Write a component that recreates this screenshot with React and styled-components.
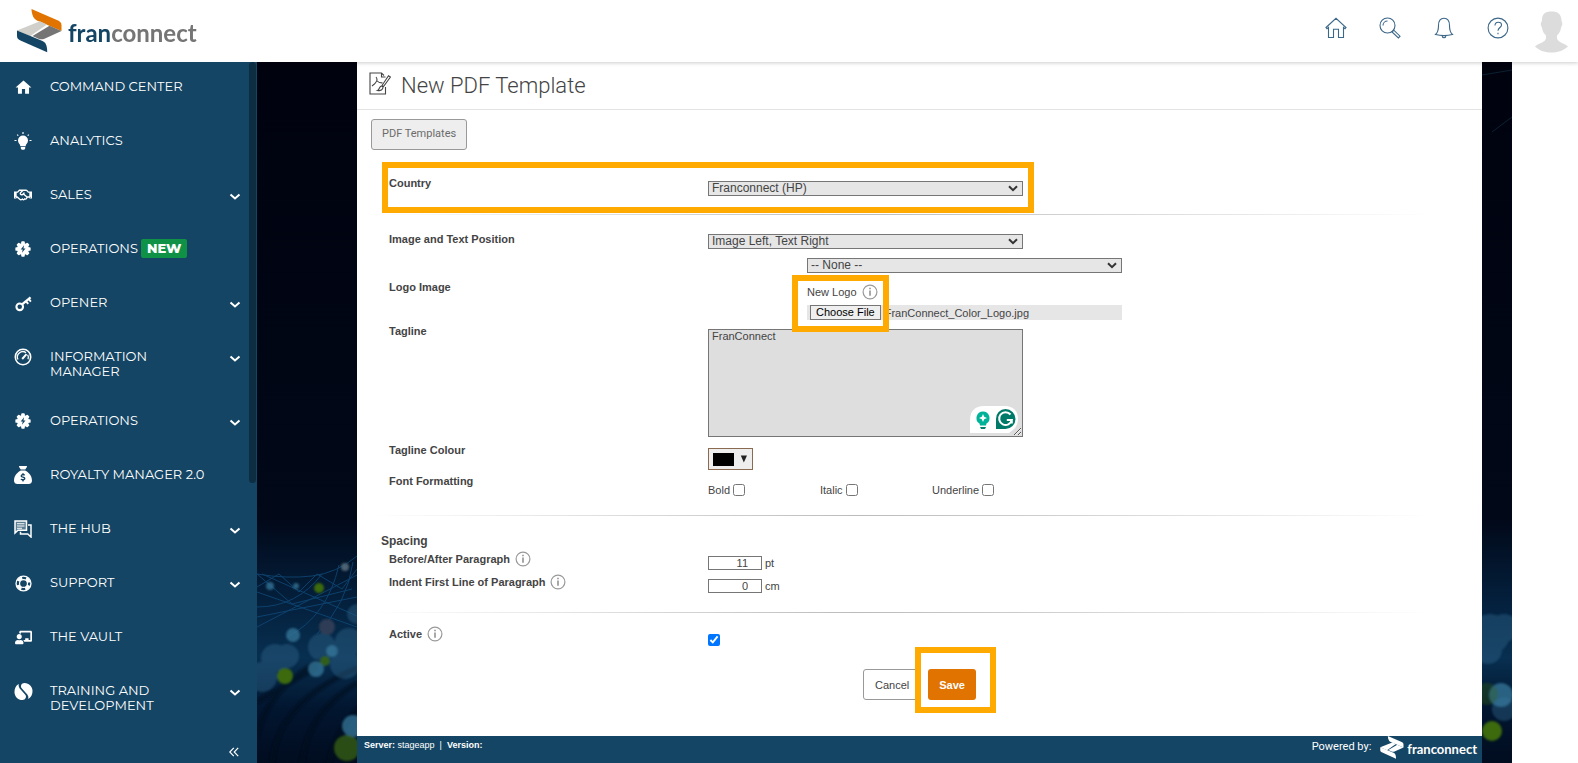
// src/App.jsx
import React, { useRef, useState } from 'react';
import styled, { createGlobalStyle } from 'styled-components';
import { FaRegHandshake, FaChalkboardTeacher } from 'react-icons/fa';
import { FaSackDollar } from 'react-icons/fa6';
import { MdHome } from 'react-icons/md';

const BulbIcon = () => (
  <svg viewBox="0 0 18 18" width="18" height="18" fill="currentColor">
    <path d="M9 3.6a5 5 0 0 0-5 5c0 2.6 2 3.2 2.4 5.6h5.2C12 11.8 14 11.2 14 8.600a5 5 0 0 0-5-5zM6.800 15h4.400v1.400l-1 1.400H7.800l-1-1.400z" />
    <path
      d="M9 0v2M3.200 2.600l1.100 1.100M14.800 2.600l-1.100 1.100M.5 8.500h2M15.500 8.500h2"
      stroke="currentColor"
      strokeWidth="1.2"
    />
  </svg>
);

const GearIcon = () => (
  <svg viewBox="0 0 18 18" width="16" height="16" fill="currentColor">
    <circle cx="9" cy="9" r="6.8" />
    {[0, 45, 90, 135].map((angle) => (
      <rect key={angle} x="7" y="0.4" width="4" height="17.2" rx="1" transform={`rotate(${angle} 9 9)`} />
    ))}
    <path d="M10.200 4.800 6.400 9.500h2.300l-.8 3.700 3.900-4.800H9.500z" fill="#144564" />
  </svg>
);

const KeyIcon = () => (
  <svg viewBox="0 0 18 18" width="17" height="17" fill="none" stroke="currentColor">
    <circle cx="5" cy="12.500" r="3.500" strokeWidth="2.200" />
    <path d="M7.500 10 16.500 2.500" strokeWidth="2.400" />
    <path d="m11.500 6.500 2.500 3M14.200 3.800l2.600 3.200" strokeWidth="2" />
  </svg>
);

const GaugeIcon = () => (
  <svg viewBox="0 0 18 18" width="18" height="18" fill="none" stroke="currentColor">
    <circle cx="9" cy="9" r="7.700" strokeWidth="1.600" />
    <path d="M4 11.500a5.400 5.400 0 0 1 8-6.800M13.700 6.700a5.400 5.400 0 0 1 .3 4.600" strokeWidth="1.300" />
    <path d="m8.200 11 4.300-4.800" strokeWidth="2" />
  </svg>
);

const ChatIcon = () => (
  <svg viewBox="0 0 18 18" width="18" height="18" fill="none" stroke="currentColor" strokeWidth="1.500">
    <path d="M1 1h11.500v9.300H4L1 13z" fill="currentColor" fillOpacity="0.300" />
    <path d="M3 3.700h7.500M3 6h7.500M3 8.200h5" strokeWidth="1.100" />
    <path d="M14 5h3v12l-3.200-3H6.500v-2.200" />
  </svg>
);

const LifebuoyIcon = () => (
  <svg viewBox="0 0 18 18" width="17" height="17" fill="none" stroke="currentColor">
    <circle cx="9" cy="9" r="7.900" strokeWidth="1.400" />
    <circle cx="9" cy="9" r="4.200" strokeWidth="1.300" />
    <circle cx="9" cy="9" r="6" strokeWidth="3.400" strokeDasharray="5.200 4.225" strokeDashoffset="-2.100" />
  </svg>
);

const TrainingIcon = () => (
  <svg viewBox="0 0 20 20" width="19" height="19" fill="currentColor">
    <path d="M5 2.200a5 5 0 0 0 .8 4.300l6.300 7.300c1.300 1.800.2 5.200-3.100 5.200C4 19 .5 15 .5 10.500.5 7 2 3.700 5 2.200z" />
    <path d="M15 17.800a5 5 0 0 0-.8-4.300L7.900 6.200C6.600 4.400 7.700 1 11 1c5 0 8.500 4 8.500 8.500 0 3.500-1.500 6.800-4.500 8.300z" />
  </svg>
);

const Chevron = () => (
  <svg viewBox="0 0 12 8" width="12" height="8" fill="none" stroke="currentColor" strokeWidth="2">
    <path d="m1.500 1.500 4.500 4 4.500-4" />
  </svg>
);

const navItems = [
  { label: 'Command Center', icon: <MdHome size={19} /> },
  { label: 'Analytics', icon: <BulbIcon /> },
  { label: 'Sales', icon: <FaRegHandshake size={18} />, open: true },
  { label: 'Operations', icon: <GearIcon />, isNew: true },
  { label: 'Opener', icon: <KeyIcon />, open: true },
  { label: 'Information Manager', icon: <GaugeIcon />, open: true },
  { label: 'Operations', icon: <GearIcon />, open: true },
  { label: 'Royalty Manager 2.0', icon: <FaSackDollar size={18} /> },
  { label: 'The Hub', icon: <ChatIcon />, open: true },
  { label: 'Support', icon: <LifebuoyIcon />, open: true },
  { label: 'The Vault', icon: <FaChalkboardTeacher size={17} /> },
  { label: 'Training and Development', icon: <TrainingIcon />, open: true },
];

const LogoMark = ({ width, height, colors }) => (
  <svg viewBox="0 0 45 44" width={width} height={height}>
    <path d="M14.500 0 41 11.500c2.500 1.200 3.500 2.500 3.500 5V22L20 11.500C16.500 9.800 14.800 6 14.500 0z" fill={colors[0]} />
    <path d="M0 21.500 23 12.300l7 3.100-17 11.800z" fill={colors[1]} />
    <path d="m15.500 27 17-10.200L44.500 22l-17 7.700c-2 .8-4 .8-6 0z" fill={colors[2]} />
    <path d="M0 21.500 25.500 32c3.500 1.600 4.700 5 4.700 11.300L4 31.800C1 30.400 0 29.500 0 26.500z" fill={colors[3]} />
  </svg>
);

const InfoIcon = () => (
  <svg viewBox="0 0 16 16" width="16" height="16" fill="none" stroke="#999" role="img" aria-label="Info">
    <circle cx="8" cy="8" r="6.900" strokeWidth="1.200" />
    <path d="M8 6.500v5.300M8 3.800v1.500" strokeWidth="1.700" />
  </svg>
);

const NightSky = () => (
  <Sky viewBox="0 0 1255 701" preserveAspectRatio="xMidYMax slice" aria-hidden="true">
    <defs>
      <linearGradient id="night" x1="0" y1="0" x2="0" y2="1">
        <stop offset="0" stopColor="#00020e" />
        <stop offset="0.650" stopColor="#010818" />
        <stop offset="0.770" stopColor="#04203d" />
        <stop offset="0.850" stopColor="#082f50" />
        <stop offset="0.920" stopColor="#021630" />
        <stop offset="1" stopColor="#010c1f" />
      </linearGradient>
      <filter id="soft">
        <feGaussianBlur stdDeviation="1" />
      </filter>
    </defs>
    <rect width="1255" height="701" fill="url(#night)" />
    <g fill="none" stroke="#0f4a7a" strokeWidth="1" opacity="0.800">
      <path d="M0 512q30 5 55 2t45-20M0 512l35 30 60-15M0 525l22-13 20 18 18-18 25 15 15-20" />
      <path d="M0 545q40 0 65-33M30 575q40-20 52-72M60 572q30-30 36-72M0 530l100 35M5 512l95 42M0 555l100-20M0 565l100-52" />
      <path d="M1225 13l30-5M1235 70l20-15" stroke="#0c2b3c" />
    </g>
    <g fill="none" stroke="#010a1b" strokeWidth="5" opacity="0.600" filter="url(#soft)">
      <path d="M0 675q10-50 70-80M15 701q5-60 85-95M45 701q5-50 55-80M72 701q5-30 30-55M0 640l60-35" />
    </g>
    <g filter="url(#soft)">
      <g fill="#2c6387" opacity="0.450">
        <circle cx="5" cy="615" r="15" />
        <circle cx="18" cy="596" r="14" />
        <circle cx="30" cy="594" r="12" />
        <circle cx="65" cy="585" r="14" />
        <circle cx="92" cy="580" r="14" />
        <circle cx="88" cy="602" r="15" />
        <circle cx="100" cy="552" r="10" />
        <circle cx="1233" cy="572" r="20" />
        <circle cx="1247" cy="566" r="14" />
        <circle cx="1231" cy="588" r="14" />
        <circle cx="1247" cy="647" r="12" />
      </g>
      <g fill="#37789b" opacity="0.750">
        <circle cx="13" cy="524" r="4" />
        <circle cx="39" cy="524" r="3" />
        <circle cx="36" cy="573" r="7" />
        <circle cx="75" cy="589" r="6" />
        <circle cx="59" cy="607" r="8" />
        <circle cx="96" cy="664" r="11" />
        <circle cx="1244" cy="633" r="12" />
      </g>
      <circle cx="70" cy="565" r="8" fill="#2e3c55" />
      <circle cx="88" cy="505" r="4" fill="#4c6472" />
      <g fill="#3c6a0a">
        <circle cx="62" cy="526" r="5" />
        <circle cx="68" cy="599" r="5" opacity="0.800" />
        <circle cx="28" cy="614" r="8" />
        <circle cx="90" cy="686" r="13" opacity="0.700" />
        <circle cx="1235" cy="669" r="10" />
        <circle cx="1230" cy="632" r="11" opacity="0.300" />
      </g>
    </g>
  </Sky>
);

const Header = () => (
  <TopBar>
    <Brand href="#">
      <LogoMark width={45} height={44} colors={['#e17400', '#d0cfca', '#757575', '#144564']} />
      <BrandName>
        fran<span>connect</span>
      </BrandName>
    </Brand>
    <Tools>
      <ToolButton aria-label="Home">
        <svg viewBox="0 0 22 22">
          <path d="M1 10.500 11 1.300l10 9.200-1 1.200-1.500-1.200v10h-5v-8.200h-5v8.200h-5v-10L2 11.700z" />
        </svg>
      </ToolButton>
      <ToolButton aria-label="Search">
        <svg viewBox="0 0 22 22">
          <circle cx="8.500" cy="8.500" r="7.500" />
          <path d="M4 8.500A4.500 4.500 0 0 1 8.500 4M13 15l1.800-1.800 6.200 6-1.600 1.700z" />
        </svg>
      </ToolButton>
      <ToolButton aria-label="Notifications">
        <svg viewBox="0 0 22 22">
          <path d="M2.500 17.500c2.500-2 3-4 3-9 0-5 2-7.300 5.500-7.300s5.500 2.300 5.500 7.300c0 5 .5 7 3 9-5 1.300-12 1.300-17 0zM9 18.500c.3 3 3.700 3 4 0" />
        </svg>
      </ToolButton>
      <ToolButton aria-label="Help">
        <svg viewBox="0 0 22 22">
          <circle cx="11" cy="11" r="9.900" />
          <path d="M8 8.500C8 4 14.500 4.500 14.500 8c0 2.500-3.500 2.500-3.500 5.700M11 15.800v1.500" />
        </svg>
      </ToolButton>
      <Avatar aria-label="Profile">
        <svg viewBox="0 0 33 42" width="33" height="42" fill="#dcdcdc">
          <path d="M7 9C7 3 10 .5 16.500.5S26 3 26.500 9c0 2 1.200 2.500.8 4.500-.3 1.500-1 2-1.300 3.500-.7 4-2.500 6-4 7.500v3c1 4 7 4.500 11 8C28 40 22 41.500 16.500 41.500S4.500 40 0 35.500c4-3.500 10-4 11-8v-3C9.500 23 7.700 21 7 17c-.3-1.500-1-2-1.200-3.500C5.500 11.500 7 11 7 9z" />
        </svg>
      </Avatar>
    </Tools>
  </TopBar>
);

const Sidebar = () => (
  <Side>
    <NavList>
      {navItems.map((item, i) => (
        <li key={i}>
          <NavLink href="#">
            <NavIcon>{item.icon}</NavIcon>
            <NavLabel>
              {item.label}
              {item.isNew && <NewBadge>New</NewBadge>}
            </NavLabel>
            {item.open && <Chevron />}
          </NavLink>
        </li>
      ))}
    </NavList>
    <Collapse aria-label="Collapse menu">
      <svg viewBox="0 0 10 10" width="10" height="10" fill="none" stroke="#fff" strokeWidth="1.200">
        <path d="M4.800.8.800 5l4 4.200M9.200.8l-4 4.200 4 4.200" />
      </svg>
    </Collapse>
    <ScrollThumb />
  </Side>
);

const Dropdown = ({ id, value }) => (
  <SelectWrap>
    <Select id={id}>
      <option>{value}</option>
    </Select>
    <SelectArrow viewBox="0 0 10 7">
      <path d="m1 1.200 4 4 4-4" />
    </SelectArrow>
  </SelectWrap>
);

const TemplateForm = () => {
  const fileRef = useRef(null);
  const [fileName, setFileName] = useState('FranConnect_Color_Logo.jpg');

  return (
    <Form onSubmit={(e) => e.preventDefault()}>
      <Row>
        <Label htmlFor="country">Country</Label>
        <Field $top={5}>
          <Dropdown id="country" value="Franconnect (HP)" />
        </Field>
        <CountryMark />
      </Row>
      <Divider $gap={18} />
      <Row $gap={17}>
        <Label htmlFor="position">Image and Text Position</Label>
        <Field $top={2}>
          <Dropdown id="position" value="Image Left, Text Right" />
        </Field>
      </Row>
      <Row $gap={9} $labelTop={22}>
        <Label htmlFor="logo">Logo Image</Label>
        <LogoField>
          <Dropdown id="logo" value="-- None --" />
          <LogoCaption>
            <span>New Logo</span>
            <InfoIcon />
          </LogoCaption>
          <FileBar>
            <input
              ref={fileRef}
              type="file"
              hidden
              aria-label="New Logo"
              onChange={(e) => e.target.files[0] && setFileName(e.target.files[0].name)}
            />
            <FileButton type="button" onClick={() => fileRef.current.click()}>
              Choose File
            </FileButton>
            <span>{fileName}</span>
          </FileBar>
          <LogoHighlight />
        </LogoField>
      </Row>
      <Row $gap={4}>
        <Label htmlFor="tagline">Tagline</Label>
        <Field $top={5}>
          <TextWrap>
            <TextArea id="tagline" defaultValue="FranConnect" />
            <WritingBadge viewBox="0 0 48 27" width="48" height="27">
              <path d="M0 27V14C0 5 5 0 14 0h21c8 0 13 5 13 13 0 4-2 8-4 10l-5 4z" fill="#fff" />
              <path d="M13 5.500a6.500 6.500 0 0 0-3.500 12l.5 2h6l.5-2a6.500 6.500 0 0 0-3.500-12z" fill="#00b398" />
              <path d="M10 21h6l-1 2h-4z" fill="#00806c" />
              <path d="M13 8l1.200 2.800L17 12l-2.800 1.200L13 16l-1.200-2.800L9 12l2.800-1.200z" fill="#fff" />
              <path d="M35.500 3a10 10 0 1 1 0 20H26V13a9.500 9.500 0 0 1 9.500-10z" fill="#007a68" />
              <path d="M40.500 8.500a6.400 6.400 0 1 0 1.300 5.500h-5M41.800 13.500v4" fill="none" stroke="#fff" strokeWidth="2" />
            </WritingBadge>
          </TextWrap>
        </Field>
      </Row>
      <Row $gap={6}>
        <Label as="span">Tagline Colour</Label>
        <Field $top={5}>
          <ColourButton type="button" aria-label="Tagline Colour">
            <Swatch />
            <svg viewBox="0 0 8 8" width="8" height="8" fill="#222">
              <path d="M.8.500h6.400L4 7.500z" />
            </svg>
          </ColourButton>
        </Field>
      </Row>
      <Row $gap={4}>
        <Label as="span">Font Formatting</Label>
        <Checks>
          {['Bold', 'Italic', 'Underline'].map((name) => (
            <CheckLabel key={name}>
              {name}
              <Check type="checkbox" />
            </CheckLabel>
          ))}
        </Checks>
      </Row>
      <Divider $gap={18} />
      <SectionTitle>Spacing</SectionTitle>
      <Row $gap={4}>
        <Label htmlFor="spacing">
          Before/After Paragraph <InfoIcon />
        </Label>
        <Field $top={4}>
          <NumberInput id="spacing" defaultValue="11" />
          pt
        </Field>
      </Row>
      <Row $gap={5}>
        <Label htmlFor="indent">
          Indent First Line of Paragraph <InfoIcon />
        </Label>
        <Field $top={4}>
          <NumberInput id="indent" defaultValue="0" />
          cm
        </Field>
      </Row>
      <Divider $gap={19} />
      <Row $gap={14}>
        <Label htmlFor="active">
          Active <InfoIcon />
        </Label>
        <Field $top={7}>
          <Check id="active" type="checkbox" defaultChecked />
        </Field>
      </Row>
      <Actions>
        <CancelButton type="button">Cancel</CancelButton>
        <SaveSlot>
          <SaveButton>Save</SaveButton>
          <SaveHighlight />
        </SaveSlot>
      </Actions>
    </Form>
  );
};

const App = () => (
  <>
    <GlobalStyle />
    <Page>
      <Header />
      <Body>
        <Sidebar />
        <Stage>
          <NightSky />
          <Main>
            <TitleBar>
              <svg viewBox="0 0 22 23" width="22" height="23" fill="none" stroke="#444" strokeWidth="1.100">
                <path d="M15 3.500 12.500 1H1v21h15.500v-7M12.500 1v4h4" />
                <path d="M7 5c2 2.500 1 5.500-4 9M8.200 9c1.300 1.500 3 2 5.300 1.800M21.500 5l-7 9.500-1.500-1L19.500 3.700zM13 14c-3-.3-2 3.500-4.500 4.500 3 .6 5.500-.5 5.500-3.500z" />
              </svg>
              <h1>New PDF Template</h1>
            </TitleBar>
            <Toolbar>
              <TemplatesButton>PDF Templates</TemplatesButton>
            </Toolbar>
            <TemplateForm />
            <Footer>
              <ServerInfo>
                <b>Server:</b> stageapp&nbsp; |&nbsp; <b>Version:</b>
              </ServerInfo>
              <Powered>
                Powered by:
                <FooterLogo>
                  <LogoMark width={24} height={23} colors={['#fff', '#fff', '#fff', '#fff']} />
                  franconnect
                </FooterLogo>
              </Powered>
            </Footer>
          </Main>
        </Stage>
      </Body>
    </Page>
  </>
);

export default App;

const GlobalStyle = createGlobalStyle`
  * {
    box-sizing: border-box;
  }

  body {
    margin: 0;
    background: #fff;
    color: #444;
    font-family: 'Liberation Sans', Arial, sans-serif;
    font-size: 11px;
    line-height: 14px;
  }

  button, input, select, textarea {
    font-family: inherit;
    color: inherit;
    margin: 0;
  }

  button {
    cursor: pointer;
  }
`;

const Page = styled.div`
  display: flex;
  flex-direction: column;
  min-height: 100vh;
`;

const TopBar = styled.header`
  display: flex;
  align-items: center;
  justify-content: space-between;
  height: 62px;
  padding: 0 10px 0 17px;
  background: #fff;
  box-shadow: 0 1px 4px rgba(0, 0, 0, 0.2);
  position: relative;
  z-index: 1;
`;

const Brand = styled.a`
  display: flex;
  align-items: center;
  gap: 6px;
  text-decoration: none;
`;

const BrandName = styled.span`
  padding-top: 4px;
  font: bold 24px/28px Lato, sans-serif;
  color: #144564;

  span {
    color: #757575;
  }
`;

const Tools = styled.div`
  display: flex;
  align-items: center;
  gap: 32px;
`;

const ToolButton = styled.button`
  width: 22px;
  height: 22px;
  margin-bottom: 6px;
  padding: 0;
  border: 0;
  background: none;

  svg {
    display: block;
    fill: none;
    stroke: #3b6788;
    stroke-width: 1.1;
  }
`;

const Avatar = styled.button`
  display: flex;
  margin: 2px 0 0 -6px;
  padding: 0;
  border: 0;
  background: none;
`;

const Body = styled.div`
  flex: 1;
  display: flex;
  padding-right: 66px;
`;

const Side = styled.nav`
  position: relative;
  z-index: 2;
  flex: 0 0 257px;
  display: flex;
  flex-direction: column;
  justify-content: space-between;
  background: #144564;
  color: #fff;
`;

const NavList = styled.ul`
  margin: 0;
  padding: 0;
  list-style: none;
`;

const NavLink = styled.a`
  display: flex;
  align-items: flex-start;
  padding: 17px 16px 17px 10px;
  color: inherit;
  text-decoration: none;
  font: 13px/15px Montserrat, Inter, sans-serif;
  text-transform: uppercase;

  > svg {
    margin-top: 6px;
  }
`;

const NavIcon = styled.span`
  display: flex;
  justify-content: center;
  align-items: center;
  width: 26px;
  height: 16px;
`;

const NavLabel = styled.span`
  flex: 1;
  min-height: 20px;
  padding: 0 20px 0 14px;
`;

const NewBadge = styled.span`
  display: inline-block;
  margin: -2px 0 -2px 3px;
  padding: 0 6px;
  border-radius: 2px;
  background: #0f9246;
  font-weight: 800;
  line-height: 19px;
`;

const Collapse = styled.button`
  align-self: flex-end;
  display: flex;
  margin-right: 18px;
  padding: 0 0 6px;
  border: 0;
  background: none;
`;

const ScrollThumb = styled.div`
  position: absolute;
  top: 0;
  right: 1px;
  width: 7px;
  height: 60%;
  border-radius: 4px;
  background: #0d2d42;
`;

const Stage = styled.div`
  flex: 1;
  display: flex;
  position: relative;
  padding: 0 30px 0 100px;
  background: #00020e;
`;

const Sky = styled.svg`
  position: absolute;
  inset: 0;
  width: 100%;
  height: 100%;
`;

const Main = styled.main`
  flex: 1;
  display: flex;
  flex-direction: column;
  position: relative;
  background: #fff;
`;

const TitleBar = styled.div`
  display: flex;
  align-items: center;
  gap: 10px;
  height: 48px;
  padding: 0 12px 4px;
  border-bottom: 1px solid #e4e4e4;

  h1 {
    margin: 4px 0 0;
    font: 300 22px/26px Roboto, sans-serif;
  }
`;

const Toolbar = styled.div`
  padding: 9px 14px 0;
`;

const TemplatesButton = styled.button`
  display: block;
  height: 31px;
  padding: 0 10px 3px;
  border: 1px solid #999;
  border-radius: 3px;
  background: #eee;
  color: #6b6b6b;
  font: 11px Roboto, sans-serif;
`;

const Form = styled.form`
  flex: 1;
  padding: 26px 24px 0;
`;

const Row = styled.div`
  display: grid;
  grid-template-columns: 319px 1fr;
  align-items: start;
  position: relative;
  margin-top: ${(props) => props.$gap || 0}px;
  padding-left: 8px;

  > :first-child {
    margin-top: ${(props) => props.$labelTop || 0}px;
  }
`;

const Label = styled.label`
  display: flex;
  align-items: center;
  gap: 5px;
  height: 14px;
  font-weight: bold;
`;

const Field = styled.div`
  display: flex;
  align-items: center;
  gap: 3px;
  padding-top: ${(props) => props.$top}px;
`;

const SelectWrap = styled.div`
  position: relative;
  width: 315px;
`;

const Select = styled.select`
  appearance: none;
  display: block;
  width: 100%;
  height: 15px;
  padding: 0 20px 0 3px;
  border: 1px solid #767676;
  border-radius: 0;
  background: #e6e6e6;
  font-size: 12px;
  line-height: 13px;
`;

const SelectArrow = styled.svg`
  position: absolute;
  top: 4px;
  right: 5px;
  width: 10px;
  height: 7px;
  fill: none;
  stroke: #333;
  stroke-width: 2;
  pointer-events: none;
`;

const Divider = styled.div`
  height: 1px;
  margin: ${(props) => props.$gap}px 5px 0 -10px;
  background: linear-gradient(to right, transparent, #bbb 45%, #ccc 60%, transparent 98%);
`;

const Highlight = styled.div`
  position: absolute;
  border: 6px solid #ffaa00;
  pointer-events: none;
  z-index: 1;
`;

const CountryMark = styled(Highlight)`
  top: -14px;
  left: 1px;
  width: 652px;
  height: 51px;
`;

const LogoField = styled.div`
  position: relative;
  margin-left: 99px;
`;

const LogoCaption = styled.div`
  display: flex;
  align-items: center;
  gap: 5px;
  padding: 11px 0 5px;
`;

const FileBar = styled.div`
  display: flex;
  align-items: center;
  gap: 4px;
  width: 315px;
  height: 15px;
  padding-left: 3px;
  background: #e6e6e6;
`;

const FileButton = styled.button`
  height: 15px;
  padding: 0 5px;
  border: 1px solid #767676;
  border-radius: 0;
  background: #efefef;
  color: #000;
  font-size: 11px;
  line-height: 13px;
`;

const LogoHighlight = styled(Highlight)`
  top: 17px;
  left: -15px;
  width: 97px;
  height: 57px;
`;

const TextWrap = styled.div`
  position: relative;
  display: flex;
`;

const TextArea = styled.textarea`
  width: 315px;
  height: 108px;
  padding: 0 3px;
  border: 1px solid #767676;
  background: #dedede;
  font-size: 11px;
  line-height: 13px;
`;

const WritingBadge = styled.svg`
  position: absolute;
  right: 5px;
  bottom: 4px;
`;

const ColourButton = styled.button`
  display: flex;
  align-items: center;
  gap: 6px;
  width: 45px;
  height: 22px;
  padding: 0 4px;
  border: 1px solid #8c6a50;
  background: #eee;
`;

const Swatch = styled.span`
  width: 22px;
  height: 13px;
  background: #000;
`;

const Checks = styled.div`
  display: grid;
  grid-template-columns: repeat(3, 112px);
  padding-top: 9px;
`;

const CheckLabel = styled.label`
  display: flex;
  align-items: center;
  gap: 3px;
`;

const Check = styled.input`
  width: 12px;
  height: 12px;
`;

const SectionTitle = styled.h2`
  margin: 18px 0 0;
  font-size: 12px;
  line-height: 14px;
`;

const NumberInput = styled.input`
  width: 54px;
  height: 14px;
  padding: 0 13px 0 2px;
  border: 1px solid #767676;
  font-size: 11px;
  text-align: right;
`;

const Actions = styled.div`
  display: flex;
  justify-content: center;
  gap: 7px;
  padding: 23px 0 35px;
`;

const ActionButton = styled.button`
  height: 31px;
  padding: 0 11px;
  border-radius: 3px;
  font-size: 11px;
`;

const CancelButton = styled(ActionButton)`
  border: 1px solid #999;
  background: #fff;
  color: #444;
`;

const SaveButton = styled(ActionButton)`
  border: 0;
  background: #e17400;
  color: #fff;
  font-weight: bold;
`;

const SaveSlot = styled.div`
  position: relative;
`;

const SaveHighlight = styled(Highlight)`
  inset: -22px -20px -13px -13px;
`;

const Footer = styled.footer`
  display: flex;
  justify-content: space-between;
  height: 27px;
  padding: 0 5px 0 7px;
  background: #144564;
  color: #fff;
`;

const ServerInfo = styled.div`
  padding-top: 2px;
  font-size: 9px;
`;

const Powered = styled.div`
  display: flex;
  align-items: flex-start;
  gap: 9px;
  font: 11px/22px Roboto, sans-serif;
`;

const FooterLogo = styled.span`
  display: flex;
  gap: 3px;
  font: bold 13px/26px Lato, sans-serif;
`;
